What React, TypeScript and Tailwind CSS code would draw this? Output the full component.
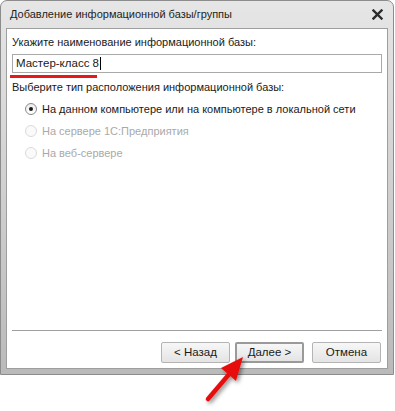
import React from 'react'

const FONT = { fontFamily: '"Liberation Sans", Arial, sans-serif' }

function Radio({ label, checked, disabled }: { label: string; checked?: boolean; disabled?: boolean }) {
  return (
    <div className="flex items-center h-[22px] pl-[13px]">
      <span
        className={
          'w-[12px] h-[12px] rounded-full border flex items-center justify-center shrink-0 ' +
          (disabled ? 'border-[#dadada] bg-[#fafafa]' : 'border-[#8a8a8a] bg-gradient-to-b from-[#ececec] to-[#ffffff]')
        }
      >
        {checked && <span className="w-[4px] h-[4px] rounded-full bg-[#1a1a1a]" />}
      </span>
      <span className={'ml-[5px] whitespace-nowrap ' + (disabled ? 'text-[#a9a9a9]' : 'text-[#1a1a1a]')}>{label}</span>
    </div>
  )
}

function Button({ children, primary }: { children: React.ReactNode; primary?: boolean }) {
  return (
    <div
      className={
        'w-[69px] h-[21px] flex items-center justify-center text-[#1a1a1a] text-[11.5px] rounded-[2px] bg-gradient-to-b from-[#f7f7f7] to-[#e4e4e4] ' +
        (primary ? 'border-2 border-[#9a9a9a]' : 'border border-[#b4b4b4]')
      }
    >
      {children}
    </div>
  )
}

export default function App() {
  return (
    <div className="relative w-[395px] h-[411px] bg-white" style={FONT}>
      {/* window frame */}
      <div className="w-[394px] h-[375px] flex flex-col rounded-t-[7px] border border-[#8c8c8c] bg-gradient-to-b from-[#e6e6e6] via-[#d0d0d0] to-[#bababa] px-[5px] pb-[5px]">
        <div className="h-[27px] flex items-center justify-between pl-[4px] pr-[5px] shrink-0">
          <span className="text-[11px] text-[#1e1e1e]">Добавление информационной базы/группы</span>
          <svg width="11" height="11" viewBox="0 0 11 11">
            <path d="M1.5 1.5 L9.5 9.5 M9.5 1.5 L1.5 9.5" stroke="#2a2a2a" strokeWidth="2.4" strokeLinecap="square" />
          </svg>
        </div>

        {/* client area */}
        <div className="flex-1 flex flex-col bg-white border border-[#9e9e9e] px-[5px] text-[11px]">
          <div className="text-[#1a1a1a] pt-[6px] leading-[14px]">Укажите наименование информационной базы:</div>
          <div className="mt-[5px] h-[19px] border border-[#a9a9a9] flex items-center pl-[3px] text-[#1a1a1a] text-[11.5px]">
            Мастер-класс 8<span className="ml-[1px] w-[1px] h-[13px] bg-black" />
          </div>
          <div className="mt-[2px] ml-[-2px] w-[87px] h-[3px] bg-[#e81818]" />
          <div className="text-[#1a1a1a] mt-[2px] leading-[14px]">Выберите тип расположения информационной базы:</div>
          <div className="mt-[4px] flex flex-col">
            <Radio label="На данном компьютере или на компьютере в локальной сети" checked />
            <Radio label="На сервере 1С:Предприятия" disabled />
            <Radio label="На веб-сервере" disabled />
          </div>
          <div className="flex-1" />
          <div className="h-px bg-[#a0a0a0]" />
          <div className="flex justify-end items-center pt-[11px] pb-[5px] pr-[1px]">
            <Button>&lt; Назад</Button>
            <div className="w-[5px]" />
            <Button primary>Далее &gt;</Button>
            <div className="w-[8px]" />
            <Button>Отмена</Button>
          </div>
        </div>
      </div>

      {/* red arrow annotation */}
      <svg className="absolute left-[198px] top-[348px]" width="62" height="62" viewBox="0 0 62 62">
        <defs>
          <filter id="sh" x="-30%" y="-30%" width="160%" height="160%">
            <feDropShadow dx="2" dy="2" stdDeviation="2" floodColor="#000" floodOpacity="0.45" />
          </filter>
        </defs>
        <g filter="url(#sh)">
          <path d="M10 51 L33 24" stroke="#e81010" strokeWidth="4.5" strokeLinecap="round" />
          <path d="M45 9 L23 20 L38 33 Z" fill="#e81010" />
        </g>
      </svg>
    </div>
  )
}
